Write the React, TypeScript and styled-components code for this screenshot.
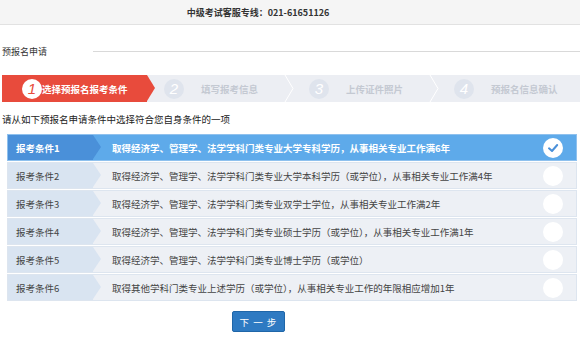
import { FC } from "react";
import styled, { createGlobalStyle } from "styled-components";

const GlobalStyle = createGlobalStyle`
    body {
        margin:0;
        background:#fff;
        font-family:"Noto Sans CJK SC", "Noto Sans", sans-serif;
        color:#333;
    }
`

const Page = styled.div`
    width:580px;
    height:337px;
    overflow:hidden;
`

const Header = styled.div`
    height:24px;
    background:#f5f5f5;
    border-bottom:1px solid #e2e2e2;
    display:flex;
    justify-content:center;
    align-items:center;
    padding-right:64px;
    font-size:9px;
    font-weight:bold;
    color:#333;
`

const TitleRow = styled.div`
    display:flex;
    align-items:center;
    margin-top:18px;
    padding-left:2px;
    height:16px;
`

const Title = styled.span`
    font-size:9px;
    color:#333;
`

const TitleLine = styled.div`
    flex:1;
    height:1px;
    background:#d9d9d9;
    margin-left:46px;
`

const Steps = styled.div`
    display:flex;
    margin:16px 0 0 2px;
    height:27px;
    background:#eceef3;
`

interface StepProps {
    active?:boolean;
}
const StepItem = styled.div<StepProps>`
    position:relative;
    flex:0 0 145px;
    display:flex;
    align-items:center;
    gap:${(props)=>props.active ? 0 : 17}px;
    padding-left:${(props)=>props.active ? 20 : 17}px;
    box-sizing:border-box;
    background:${(props)=>props.active ? "#e84b3c" : "transparent"};
    &::after {
        content:"";
        display:${(props)=>props.active ? "block" : "none"};
        position:absolute;
        right:-8px;
        top:0;
        border-left:8px solid #e84b3c;
        border-top:13.5px solid transparent;
        border-bottom:13.5px solid transparent;
        z-index:1;
    }
`

const StepNum = styled.span<StepProps>`
    width:20px;
    height:20px;
    border-radius:50%;
    background:${(props)=>props.active ? "#fff" : "#dfe4ed"};
    color:${(props)=>props.active ? "#e84b3c" : "#fff"};
    display:flex;
    justify-content:center;
    align-items:center;
    font-family:"Liberation Sans", sans-serif;
    font-style:italic;
    font-size:15px;
    flex:none;
`

const StepText = styled.span<StepProps>`
    font-size:9.5px;
    font-weight:bold;
    color:${(props)=>props.active ? "#fff" : "#c4c9d2"};
    white-space:nowrap;
`

const Chevron = styled.svg`
    position:absolute;
    right:-2px;
    top:0;
`

const Hint = styled.div`
    margin:9px 0 0 2px;
    font-size:9.5px;
    color:#222;
    height:16px;
    line-height:16px;
`

const Table = styled.div`
    margin:7px 3px 0 7px;
    display:flex;
    flex-direction:column;
    gap:1px;
`

interface RowProps {
    selected?:boolean;
}
const Row = styled.div<RowProps>`
    display:flex;
    height:25px;
    border:1px solid ${(props)=>props.selected ? "#8fc1ee" : "#dde5ef"};
    background:${(props)=>props.selected ? "#5eaaea" : "#edf0f5"};
    font-size:9.5px;
    font-weight:${(props)=>props.selected ? "bold" : "normal"};
    color:${(props)=>props.selected ? "#fff" : "#444"};
`

const Label = styled.div<RowProps>`
    position:relative;
    width:85px;
    flex:none;
    display:flex;
    align-items:center;
    padding-left:8px;
    box-sizing:border-box;
    background:${(props)=>props.selected ? "#4a90d9" : "#d9e4f1"};
    &::after {
        content:"";
        position:absolute;
        right:-8px;
        top:0;
        border-left:8px solid ${(props)=>props.selected ? "#4a90d9" : "#d9e4f1"};
        border-top:12.5px solid transparent;
        border-bottom:12.5px solid transparent;
    }
`

const Desc = styled.div`
    flex:1;
    display:flex;
    align-items:center;
    padding:0 13px 0 19px;
    white-space:nowrap;
`

const DescText = styled.span`
    flex:1;
`

const Radio = styled.span`
    width:20px;
    height:20px;
    border-radius:50%;
    background:#fff;
    display:flex;
    justify-content:center;
    align-items:center;
    flex:none;
`

const Footer = styled.div`
    display:flex;
    padding-left:232px;
    margin-top:10px;
`

const NextButton = styled.button`
    width:53px;
    height:21px;
    background:#2e7ac2;
    border:1px solid #1f66a8;
    border-radius:2px;
    color:#fff;
    font-family:"Noto Sans CJK SC", sans-serif;
    font-size:9.5px;
    padding:0;
    letter-spacing:1px;
`

const steps = ["选择预报名报考条件", "填写报考信息", "上传证件照片", "预报名信息确认"];

const conditions = [
    "取得经济学、管理学、法学学科门类专业大学专科学历，从事相关专业工作满6年",
    "取得经济学、管理学、法学学科门类专业大学本科学历（或学位），从事相关专业工作满4年",
    "取得经济学、管理学、法学学科门类专业双学士学位，从事相关专业工作满2年",
    "取得经济学、管理学、法学学科门类专业硕士学历（或学位），从事相关专业工作满1年",
    "取得经济学、管理学、法学学科门类专业博士学历（或学位）",
    "取得其他学科门类专业上述学历（或学位），从事相关专业工作的年限相应增加1年",
];

const CheckIcon:FC = ()=>(
    <svg width="12" height="12" viewBox="0 0 12 12">
        <path d="M2 6.3 L5 9 L10.2 3" fill="none" stroke="#4a90d9" strokeWidth="2" strokeLinecap="round" strokeLinejoin="round"/>
    </svg>
)

const App:FC = ()=>{
    return (
        <Page>
            <GlobalStyle/>
            <Header>中级考试客服专线：021-61651126</Header>
            <TitleRow>
                <Title>预报名申请</Title>
                <TitleLine/>
            </TitleRow>
            <Steps>
                {steps.map((s,i)=>(
                    <StepItem key={s} active={i===0}>
                        <StepNum active={i===0}>{i+1}</StepNum>
                        <StepText active={i===0}>{s}</StepText>
                        {i>0 && i<3 && (
                            <Chevron width="10" height="27" viewBox="0 0 10 27">
                                <polyline points="1,0 9,13.5 1,27" fill="none" stroke="#fff" strokeWidth="1"/>
                            </Chevron>
                        )}
                    </StepItem>
                ))}
            </Steps>
            <Hint>请从如下预报名申请条件中选择符合您自身条件的一项</Hint>
            <Table>
                {conditions.map((c,i)=>(
                    <Row key={i} selected={i===0}>
                        <Label selected={i===0}>报考条件{i+1}</Label>
                        <Desc>
                            <DescText>{c}</DescText>
                            <Radio>{i===0 && <CheckIcon/>}</Radio>
                        </Desc>
                    </Row>
                ))}
            </Table>
            <Footer>
                <NextButton>下 一 步</NextButton>
            </Footer>
        </Page>
    )
}
export default App;
